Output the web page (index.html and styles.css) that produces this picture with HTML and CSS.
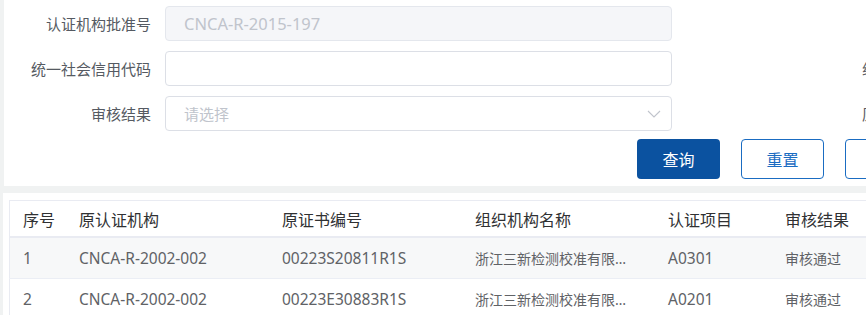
FILE: index.html
```html
<!DOCTYPE html>
<html>
<head>
    <title>认证信息查询</title>
    <link rel="stylesheet" href="styles.css">
</head>
<body>
    <div class="search-card">
        <div class="form-grid">
            <div class="form-item">
                <label class="form-label">认证机构批准号</label>
                <div class="form-input disabled">CNCA-R-2015-197</div>
            </div>
            <div class="form-item side"></div>
            <div class="form-item">
                <label class="form-label">统一社会信用代码</label>
                <div class="form-input"></div>
            </div>
            <div class="form-item side">
                <label class="form-label">组织机构名称</label>
            </div>
            <div class="form-item">
                <label class="form-label">审核结果</label>
                <div class="form-input select">
                    <span class="placeholder">请选择</span>
                    <svg class="arrow" width="14" height="8" viewBox="0 0 14 8"><path d="M1 1 L7 7 L13 1" fill="none" stroke="#c0c4cc" stroke-width="1.1"/></svg>
                </div>
            </div>
            <div class="form-item side">
                <label class="form-label">原证书编号</label>
            </div>
        </div>
        <div class="btn-row">
            <button class="btn primary">查询</button>
            <button class="btn plain">重置</button>
            <button class="btn plain">导出</button>
        </div>
    </div>
    <div class="table-card">
        <table class="data-table">
            <thead>
                <tr>
                    <th class="col-no">序号</th>
                    <th class="col-org">原认证机构</th>
                    <th class="col-cert">原证书编号</th>
                    <th class="col-name">组织机构名称</th>
                    <th class="col-item">认证项目</th>
                    <th class="col-result">审核结果</th>
                    <th class="col-more">操作</th>
                </tr>
            </thead>
            <tbody>
                <tr class="striped">
                    <td>1</td>
                    <td>CNCA-R-2002-002</td>
                    <td>00223S20811R1S</td>
                    <td class="small"><div class="ellipsis">浙江三新检测校准有限公司</div></td>
                    <td>A0301</td>
                    <td class="small">审核通过</td>
                    <td></td>
                </tr>
                <tr>
                    <td>2</td>
                    <td>CNCA-R-2002-002</td>
                    <td>00223E30883R1S</td>
                    <td class="small"><div class="ellipsis">浙江三新检测校准有限公司</div></td>
                    <td>A0201</td>
                    <td class="small">审核通过</td>
                    <td></td>
                </tr>
            </tbody>
        </table>
    </div>
</body>
</html>
```

FILE: styles.css
```css
body {
    font-family: "Noto Sans", "Noto Sans CJK SC", sans-serif;
    background-color: #f0f2f2;
    margin: 0;
    padding: 0 0 0 3px;
    width: 1200px;
    overflow: hidden;
    color: #606266;
}
.search-card {
    background-color: #fff;
    margin-left: 1px;
    padding-top: 6px;
    height: 186px;
    box-sizing: border-box;
}
.form-grid {
    display: grid;
    grid-template-columns: 669px 400px;
    row-gap: 10px;
}
.form-item {
    display: flex;
    align-items: center;
    height: 35px;
}
.form-label {
    width: 147px;
    padding-right: 14px;
    text-align: right;
    font-size: 15px;
    color: #555a62;
    flex-shrink: 0;
}
.form-item.side .form-label {
    width: auto;
    padding: 0 0 0 189px;
    text-align: left;
}
.form-input {
    width: 507px;
    height: 35px;
    box-sizing: border-box;
    border: 1px solid #dcdfe6;
    border-radius: 4px;
    padding-left: 18px;
    display: flex;
    align-items: center;
    font-size: 15px;
}
.form-input.disabled {
    background-color: #f5f6f9;
    border-color: #e4e7ed;
    color: #c0c4cc;
    font-size: 16.5px;
}
.form-input.select {
    justify-content: space-between;
    padding-right: 10px;
}
.placeholder {
    color: #c0c4cc;
}
.arrow {
    margin-top: 1px;
}
.btn-row {
    display: flex;
    gap: 21px;
    padding-left: 633px;
    margin-top: 8px;
}
.btn {
    width: 83px;
    height: 40px;
    border-radius: 4px;
    font-size: 16px;
    font-family: "Noto Sans CJK SC", sans-serif;
    cursor: pointer;
    flex-shrink: 0;
}
.btn.primary {
    background-color: #0b52a0;
    border: none;
    color: #fff;
}
.btn.plain {
    background-color: #fff;
    border: 1px solid #1a6cc2;
    color: #1a6cc2;
}
.table-card {
    background-color: #fff;
    margin-top: 7px;
    padding: 7px 0 0 6px;
    height: 200px;
}
.data-table {
    border-collapse: collapse;
    table-layout: fixed;
    border: 1px solid #e9ebf2;
    width: 1000px;
}
.data-table th {
    height: 35px;
    text-align: left;
    font-weight: normal;
    font-size: 16px;
    color: #303133;
    padding: 0 0 0 13px;
    border-bottom: 2px solid #e9ebf2;
}
.data-table td {
    height: 40px;
    padding: 0 0 0 13px;
    font-size: 15.5px;
    color: #606266;
    border-bottom: 1px solid #ebeef5;
}
.data-table td.small {
    font-size: 14px;
}
.data-table tr.striped td {
    background-color: #f7f8f9;
}
.col-no { width: 43px; }
.col-org { width: 190px; }
.col-cert { width: 180px; }
.col-name { width: 180px; }
.col-item { width: 104px; }
.col-result { width: 110px; }
.ellipsis {
    width: 156px;
    white-space: nowrap;
    overflow: hidden;
    text-overflow: ellipsis;
}
```
